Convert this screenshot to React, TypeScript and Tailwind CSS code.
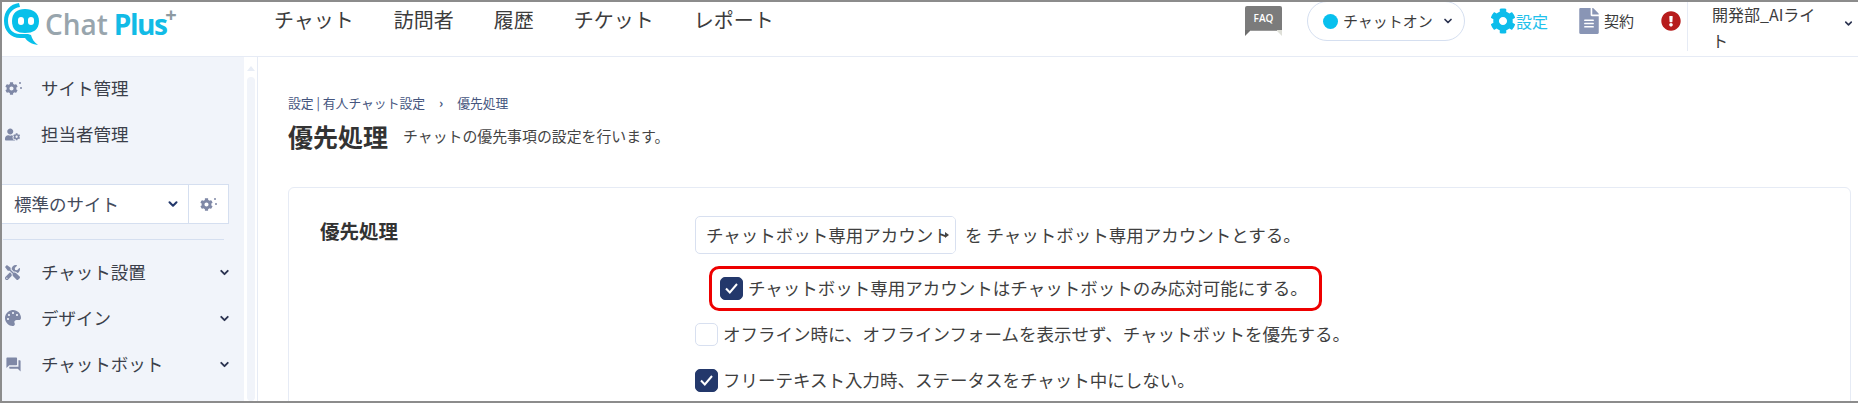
import { ChevronDown } from "lucide-react";
import { FaCog, FaExclamationCircle, FaFileAlt, FaPalette, FaTools, FaUserCog } from "react-icons/fa";
import { MdForum } from "react-icons/md";

const jp = "font-['Noto_Sans_CJK_JP','Noto_Sans',sans-serif]";

function Logo() {
    return (
        <div className="flex h-[40px] w-[232px] items-center">
            <svg width="38" height="44" viewBox="0 0 38 44" className="mt-[4px] ml-[1px] shrink-0">
                <path d="M16 1C7 2 1 9 1 19c0 10 7 17 16 17h5c2 3 6 6 13 7-4-3-6-6-7-10l-3-1h-8C9 32 5 26 5 19 5 11 10 6 17 5z" fill="#08c0ea" />
                <path d="M22 7c8 0 14 4 14 12 0 9-6 12-14 12S9 28 9 19C9 11 14 7 22 7z" fill="#08c0ea" />
                <rect x="15" y="15" width="6" height="8" rx="3" fill="#fff" />
                <rect x="25" y="15" width="6" height="8" rx="3" fill="#fff" />
            </svg>
            <div className="ml-[4px] flex items-start font-['Open_Sans',sans-serif] text-[28px] leading-none">
                <span className="mt-[4px] font-semibold text-[#98a5ad]">Chat</span>
                <span className="mt-[4px] ml-[6px] font-bold tracking-[-1.5px] text-[#12bbe6]">Plus</span>
                <span className="-mt-[1px] ml-[-1px] text-[20px] font-bold text-[#8d9aa2]">+</span>
            </div>
        </div>
    );
}

// gear with the two small sparks the reference draws beside it
function GearSpark() {
    return (
        <span className="relative flex h-[16px] w-[17px] items-center">
            <FaCog size={13} />
            <span className="absolute right-[1px] top-[2px] h-[2px] w-[2px] rounded-full bg-[#7f88a6]" />
            <span className="absolute right-0 top-[7px] h-[2px] w-[2px] rounded-full bg-[#7f88a6]" />
        </span>
    );
}

function SideItem({ icon, label, arrow }: { icon: React.ReactNode; label: string; arrow?: boolean }) {
    return (
        <div className="flex h-[46px] items-center">
            <span className="flex w-[39px] justify-start pl-[3px] text-[#7f88a6]">{icon}</span>
            <span className="flex-1 text-[17.5px] text-[#3b3f4a]">{label}</span>
            {arrow && <ChevronDown size={13} strokeWidth={3.5} className="mr-[13px] text-[#2b3350]" />}
        </div>
    );
}

function Check({ on }: { on: boolean }) {
    return (
        <span
            className={`flex h-[23px] w-[23px] shrink-0 items-center justify-center rounded-[5px] border ${
                on ? "border-[#23386b] bg-[#23386b]" : "border-[#d8e0f0] bg-white"
            }`}
        >
            {on && (
                <svg width="15" height="13" viewBox="0 0 15 13">
                    <path d="M2 6.5l3.8 4L13 2" fill="none" stroke="#fff" strokeWidth="2" />
                </svg>
            )}
        </span>
    );
}

export default function App() {
    return (
        <div className={`flex h-[403px] w-[1858px] flex-col overflow-hidden border-y-2 border-l-2 border-y-[#8c8c8c] border-l-[#8c8c8c] bg-white ${jp}`}>
            <header className="flex h-[55px] shrink-0 items-start border-b border-[#e6ebf5] bg-white">
                <Logo />
                <nav className="ml-[40px] flex h-[36px] items-center gap-[40px] text-[20px] text-[#3c3c3c]">
                    <span>チャット</span>
                    <span>訪問者</span>
                    <span>履歴</span>
                    <span>チケット</span>
                    <span>レポート</span>
                </nav>
                <div className="ml-auto flex h-[38px] items-center">
                    <div className="mr-[25px] flex h-[30px] w-[37px] flex-col">
                        <div className="flex h-[24px] items-center justify-center rounded-t-[2px] bg-[#7b7b7b] font-['Open_Sans',sans-serif] text-[10px] font-semibold text-white">FAQ</div>
                        <svg width="37" height="6" viewBox="0 0 37 6" className="block">
                            <path d="M0 0h5v1L0 6z" fill="#6f6f6f" />
                            <path d="M5 0h27v1H5z" fill="#9a9a9a" />
                            <path d="M32 0h5v6l-5-5z" fill="#dedfd8" />
                        </svg>
                    </div>
                    <div className="flex h-[40px] w-[158px] items-center rounded-full border border-[#d5dff0] pl-[15px]">
                        <span className="h-[15px] w-[15px] rounded-[50%] bg-[#08c0ee]" />
                        <span className="ml-[5px] text-[15px] text-[#3c3c3c]">チャットオン</span>
                        <ChevronDown size={12} strokeWidth={3.5} className="ml-[9px] text-[#2b3350]" />
                    </div>
                    <FaCog size={26} className="ml-[25px] text-[#0dbdeb]" />
                    <span className="text-[16px] text-[#1fc1ec]">設定</span>
                    <FaFileAlt size={26} className="ml-[28px] text-[#8995b5]" />
                    <span className="ml-[2px] text-[15px] text-[#3c3c3c]">契約</span>
                    <FaExclamationCircle size={20} className="ml-[27px] text-[#b71c1c]" />
                    <div className="mt-[11px] ml-[6px] flex h-[49px] w-[171px] items-start border-l border-[#e6ebf5] pl-[24px]">
                        <span className="mt-[-1px] w-[104px] text-[16px] leading-[26px] text-[#3c3c3c]">開発部_AIライト</span>
                        <ChevronDown size={11} strokeWidth={3.5} className="mt-[16px] ml-auto mr-[4px] text-[#2b3350]" />
                    </div>
                </div>
            </header>
            <div className="flex min-h-0 flex-1">
                <aside className="flex w-[242px] shrink-0 flex-col bg-[#f1f4fa] pt-[8px]">
                    <SideItem icon={<GearSpark />} label="サイト管理" />
                    <SideItem icon={<FaUserCog size={15} />} label="担当者管理" />
                    <div className="mt-[27px] flex h-[40px] w-[227px] items-center border border-l-0 border-[#d5dff0] bg-white">
                        <span className="flex-1 pl-[12px] text-[17.5px] text-[#444b5c]">標準のサイト</span>
                        <ChevronDown size={14} strokeWidth={3.5} className="mr-[8px] text-[#23386b]" />
                        <span className="flex h-full w-[40px] items-center justify-center border-l border-[#d5dff0] text-[#7f88a6]">
                            <GearSpark />
                        </span>
                    </div>
                    <div className="ml-[1px] mt-[15px] h-[1px] w-[221px] bg-[#d5dff0]" />
                    <div className="mt-[9px]">
                        <SideItem icon={<FaTools size={15} />} label="チャット設置" arrow />
                        <SideItem icon={<FaPalette size={16} />} label="デザイン" arrow />
                        <SideItem icon={<MdForum size={17} />} label="チャットボット" arrow />
                    </div>
                </aside>
                <div className="flex w-[14px] shrink-0 flex-col items-center border-r border-[#e6ebf5] bg-white pt-[9px]">
                    <span className="h-0 w-0 border-x-[4px] border-b-[5px] border-x-transparent border-b-[#e8edf6]" />
                    <span className="mt-[6px] h-full w-[8px] rounded-full bg-[#f1f4fa]" />
                </div>
                <main className="min-w-0 flex-1 pr-[7px] pl-[30px] pt-[37px]">
                    <div className="flex items-center text-[12.8px] leading-[18px] text-[#45557e]">
                        <span>設定 | 有人チャット設定</span>
                        <span className="mx-[14px] font-bold">›</span>
                        <span>優先処理</span>
                    </div>
                    <div className="mt-[6px] flex items-center">
                        <h1 className="text-[25px] leading-[36px] font-bold text-[#333]">優先処理</h1>
                        <span className="ml-[15px] text-[14.9px] text-[#444]">チャットの優先事項の設定を行います。</span>
                    </div>
                    <section className="mt-[33px] flex h-[240px] rounded-t-[6px] border border-[#e6ebf5] pl-[31px] pt-[28px]">
                        <h2 className="w-[375px] text-[19.5px] leading-[30px] font-bold text-[#333]">優先処理</h2>
                        <div className="flex flex-col text-[17.5px] leading-[24px] text-[#3f3f3f]">
                            <div className="flex items-center">
                                <span className="relative flex h-[38px] w-[261px] items-center overflow-hidden rounded-[5px] border border-[#d8e0f0] pl-[10px] whitespace-nowrap">
                                    チャットボット専用アカウント
                                    <span className="absolute right-0 top-0 flex h-full w-[10px] items-center bg-white">
                                        <span className="h-0 w-0 border-y-[3px] border-l-[4px] border-y-transparent border-l-[#444]" />
                                    </span>
                                </span>
                                <span className="ml-[9px]">を チャットボット専用アカウントとする。</span>
                            </div>
                            <div className="ml-[14px] mt-[12px] flex h-[45px] w-[613px] items-center rounded-[10px] border-[3.5px] border-[#ee0000] pl-[8px]">
                                <Check on />
                                <span className="ml-[5px] -mt-[1px]">チャットボット専用アカウントはチャットボットのみ応対可能にする。</span>
                            </div>
                            <div className="mt-[11px] flex items-center">
                                <Check on={false} />
                                <span className="ml-[5px]">オフライン時に、オフラインフォームを表示せず、チャットボットを優先する。</span>
                            </div>
                            <div className="mt-[22px] flex items-center">
                                <Check on />
                                <span className="ml-[5px]">フリーテキスト入力時、ステータスをチャット中にしない。</span>
                            </div>
                        </div>
                    </section>
                </main>
            </div>
        </div>
    );
}
